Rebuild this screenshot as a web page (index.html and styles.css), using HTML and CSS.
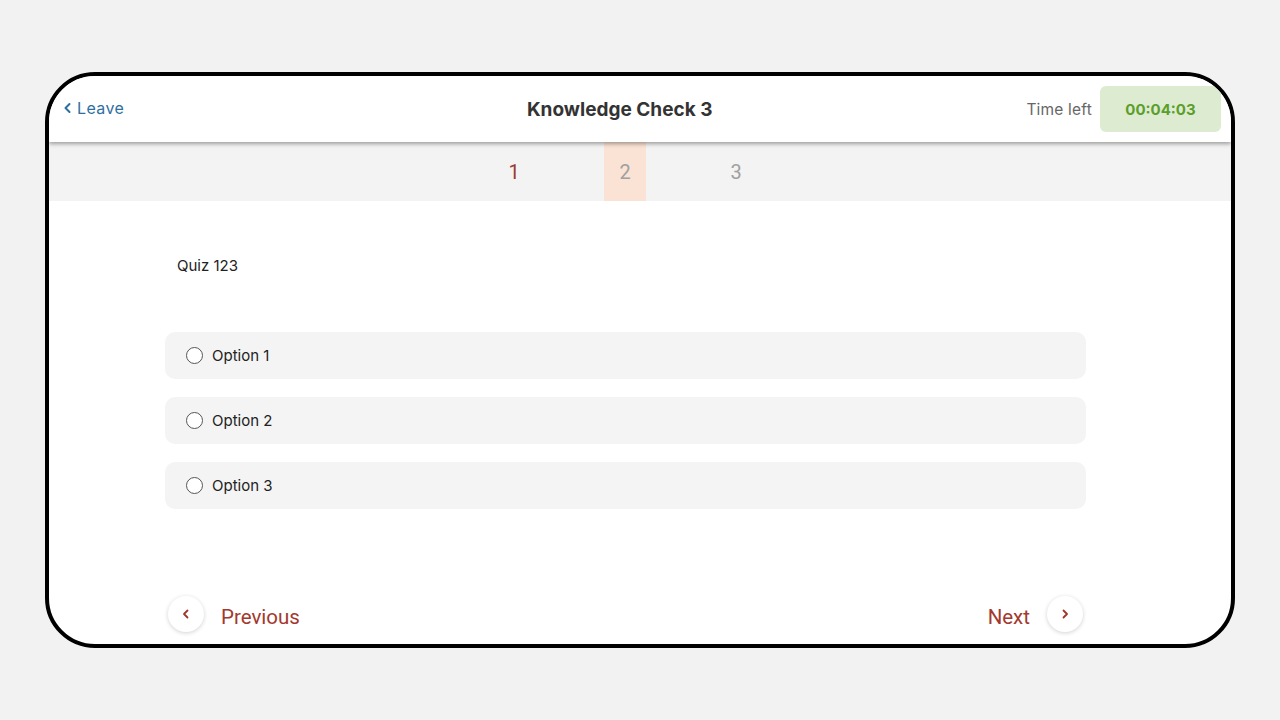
FILE: index.html
```html
<!DOCTYPE html>
<html>
<head>
<meta charset="utf-8">
<link rel="stylesheet" href="styles.css">
</head>
<body>
<div class="frame">
  <header class="header">
    <a class="leave">
      <svg width="9" height="12" viewBox="0 0 9 12"><path d="M6.5 2 L2.5 6 L6.5 10" fill="none" stroke="#2f6f9f" stroke-width="2" stroke-linecap="round" stroke-linejoin="round"/></svg>
      <span>Leave</span>
    </a>
    <h1 class="title">Knowledge Check 3</h1>
    <div class="timer">
      <span class="time-label">Time left</span>
      <span class="time-box">00:04:03</span>
    </div>
  </header>
  <nav class="tabs">
    <span class="tab done">1</span>
    <span class="tab active">2</span>
    <span class="tab">3</span>
  </nav>
  <main class="content">
    <p class="question">Quiz 123</p>
    <div class="options">
      <label class="option"><span class="radio"></span><span>Option 1</span></label>
      <label class="option"><span class="radio"></span><span>Option 2</span></label>
      <label class="option"><span class="radio"></span><span>Option 3</span></label>
    </div>
    <div class="nav">
      <div class="nav-item">
        <span class="circle"><svg width="12" height="12" viewBox="0 0 12 12"><path d="M7.5 2.5 L4 6 L7.5 9.5" fill="none" stroke="#a3332b" stroke-width="1.8" stroke-linecap="round" stroke-linejoin="round"/></svg></span>
        <span class="nav-text">Previous</span>
      </div>
      <div class="nav-item">
        <span class="nav-text">Next</span>
        <span class="circle"><svg width="12" height="12" viewBox="0 0 12 12"><path d="M4.5 2.5 L8 6 L4.5 9.5" fill="none" stroke="#a3332b" stroke-width="1.8" stroke-linecap="round" stroke-linejoin="round"/></svg></span>
      </div>
    </div>
  </main>
</div>
</body>
</html>
```
FILE: styles.css
```css
* { box-sizing: border-box; }
html, body { margin: 0; padding: 0; }
body {
  background: #f2f2f2;
  width: 1280px;
  height: 720px;
  overflow: hidden;
  font-family: Inter, "Noto Sans", sans-serif;
}
.frame {
  margin: 72px 0 0 45px;
  width: 1190px;
  height: 576px;
  border: 4px solid #000;
  border-radius: 50px;
  background: #fff;
  overflow: hidden;
  display: flex;
  flex-direction: column;
}
.header {
  height: 66px;
  flex: none;
  display: flex;
  align-items: center;
  padding: 0 10px 0 14px;
  background: #fff;
  position: relative;
  z-index: 2;
  box-shadow: 0 2px 4px rgba(0,0,0,0.35);
}
.leave {
  display: flex;
  align-items: center;
  gap: 5px;
  color: #2f6f9f;
  font-size: 16px;
  letter-spacing: 0.4px;
  width: 150px;
  flex: none;
  margin-top: -2px;
}
.title {
  flex: 1;
  text-align: center;
  margin: 0;
  font-size: 19px;
  font-weight: 700;
  color: #333;
}
.timer {
  display: flex;
  align-items: center;
  gap: 8px;
  flex: none;
}
.time-label {
  color: #666;
  font-size: 15.5px;
  letter-spacing: 0.2px;
}
.time-box {
  width: 121px;
  height: 46px;
  background: #ddecd0;
  border-radius: 6px;
  color: #5b9e2c;
  font-size: 15px;
  font-weight: 700;
  display: flex;
  align-items: center;
  justify-content: center;
}
.tabs {
  height: 59px;
  flex: none;
  background: #f3f3f3;
  display: flex;
  justify-content: center;
  gap: 69px;
  padding-right: 30px;
}
.tab {
  width: 42px;
  display: flex;
  align-items: center;
  justify-content: center;
  font-family: Roboto, sans-serif;
  font-size: 20px;
  color: #a0a0a0;
}
.tab.done { color: #9c3a33; }
.tab.active { background: #fae3d4; color: #a0a0a0; }
.content {
  padding-left: 116px;
  width: 1037px;
}
.question {
  margin: 55px 0 0 12px;
  font-size: 15px;
  line-height: 20px;
  color: #222;
}
.options {
  margin-top: 56px;
  display: flex;
  flex-direction: column;
  gap: 18px;
}
.option {
  height: 47px;
  background: #f4f4f4;
  border-radius: 10px;
  display: flex;
  align-items: center;
  gap: 9px;
  padding-left: 21px;
  font-size: 15px;
  color: #222;
}
.radio {
  width: 17px;
  height: 17px;
  border: 1.6px solid #555;
  border-radius: 50%;
  background: #fff;
}
.nav {
  margin-top: 87px;
  display: flex;
  justify-content: space-between;
  padding: 0 3px 0 3px;
}
.nav-item {
  display: flex;
  align-items: center;
  gap: 17px;
}
.circle {
  width: 36px;
  height: 36px;
  border-radius: 50%;
  background: #fff;
  box-shadow: 0 1px 4px rgba(0,0,0,0.18);
  display: flex;
  align-items: center;
  justify-content: center;
}
.nav-text {
  font-family: Roboto, sans-serif;
  font-size: 20.5px;
  color: #a3382e;
  margin-top: 6px;
}
```
